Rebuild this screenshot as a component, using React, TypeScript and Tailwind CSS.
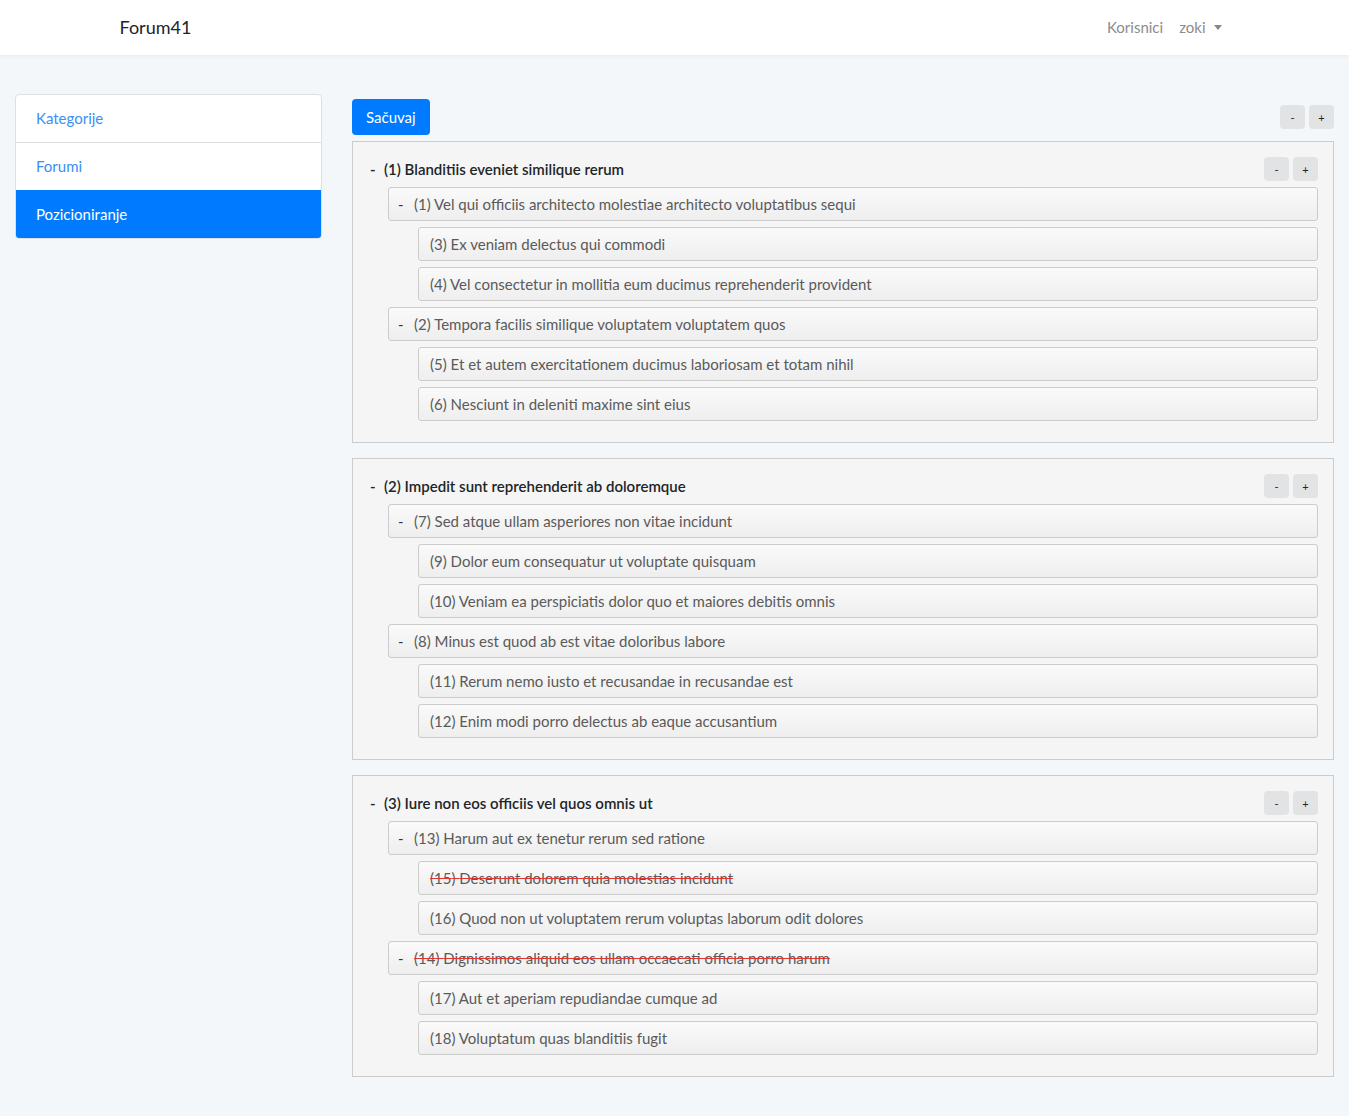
import React from 'react';

type Node = { id: number; title: string; struck?: boolean; children?: Node[] };

const tree: { id: number; title: string; children: Node[] }[] = [
  {
    id: 1, title: 'Blanditiis eveniet similique rerum', children: [
      { id: 1, title: 'Vel qui officiis architecto molestiae architecto voluptatibus sequi', children: [
        { id: 3, title: 'Ex veniam delectus qui commodi' },
        { id: 4, title: 'Vel consectetur in mollitia eum ducimus reprehenderit provident' },
      ] },
      { id: 2, title: 'Tempora facilis similique voluptatem voluptatem quos', children: [
        { id: 5, title: 'Et et autem exercitationem ducimus laboriosam et totam nihil' },
        { id: 6, title: 'Nesciunt in deleniti maxime sint eius' },
      ] },
    ],
  },
  {
    id: 2, title: 'Impedit sunt reprehenderit ab doloremque', children: [
      { id: 7, title: 'Sed atque ullam asperiores non vitae incidunt', children: [
        { id: 9, title: 'Dolor eum consequatur ut voluptate quisquam' },
        { id: 10, title: 'Veniam ea perspiciatis dolor quo et maiores debitis omnis' },
      ] },
      { id: 8, title: 'Minus est quod ab est vitae doloribus labore', children: [
        { id: 11, title: 'Rerum nemo iusto et recusandae in recusandae est' },
        { id: 12, title: 'Enim modi porro delectus ab eaque accusantium' },
      ] },
    ],
  },
  {
    id: 3, title: 'Iure non eos officiis vel quos omnis ut', children: [
      { id: 13, title: 'Harum aut ex tenetur rerum sed ratione', children: [
        { id: 15, title: 'Deserunt dolorem quia molestias incidunt', struck: true },
        { id: 16, title: 'Quod non ut voluptatem rerum voluptas laborum odit dolores' },
      ] },
      { id: 14, title: 'Dignissimos aliquid eos ullam occaecati officia porro harum', struck: true, children: [
        { id: 17, title: 'Aut et aperiam repudiandae cumque ad' },
        { id: 18, title: 'Voluptatum quas blanditiis fugit' },
      ] },
    ],
  },
];

const SmallBtn = ({ label }: { label: string }) => (
  <button className="w-[25px] h-[24px] rounded-[4px] bg-[#e2e3e5] text-[#212529] text-[11px] leading-none flex items-center justify-center">
    {label}
  </button>
);

const Item = ({ node, toggle }: { node: Node; toggle?: boolean }) => (
  <div className="h-[34px] flex items-center rounded-[3px] border border-[#ccc] bg-linear-to-b from-[#fafafa] to-[#eee] text-[#5a5a5a] text-[15px]">
    {toggle ? (
      <span className="pl-[9px] w-[25px] text-[#333]">-</span>
    ) : (
      <span className="w-[11px]" />
    )}
    <span className={node.struck ? 'line-through decoration-[#e3342f]' : ''}>
      ({node.id}) {node.title}
    </span>
  </div>
);

const App = () => {
  return (
    <div className="min-h-screen bg-[#f4f7fa] pb-[38px]" style={{ fontFamily: 'Lato, "Open Sans", sans-serif' }}>
      {/* Navbar */}
      <div className="bg-white h-[55px] shadow-[0_2px_4px_rgba(0,0,0,0.04)]">
        <div className="w-[1140px] mx-auto px-[15px] h-full flex items-center justify-between">
          <span className="text-[18px] text-[#212529]">Forum41</span>
          <div className="flex items-center text-[15px] text-[#8c8c8c] pr-[8px]">
            <span className="px-[8px]">Korisnici</span>
            <span className="pl-[8px] flex items-center">
              zoki
              <span className="ml-[8px] w-0 h-0 border-l-[4px] border-r-[4px] border-t-[5px] border-l-transparent border-r-transparent border-t-[#888]" />
            </span>
          </div>
        </div>
      </div>

      <div className="flex pt-[39px]">
        {/* Sidebar */}
        <div className="w-[337px] px-[15px] shrink-0">
          <div className="rounded-[4px] border border-[#dfdfdf] overflow-hidden bg-white text-[15px]">
            <div className="h-[48px] flex items-center px-[20px] text-[#3a8ff5] border-b border-[#dfdfdf]">Kategorije</div>
            <div className="h-[47px] flex items-center px-[20px] text-[#3a8ff5]">Forumi</div>
            <div className="h-[48px] flex items-center px-[20px] bg-[#007bff] text-white">Pozicioniranje</div>
          </div>
        </div>

        {/* Main */}
        <div className="flex-1 px-[15px]">
          <div className="flex items-start justify-between mt-[5px] mb-[6px]">
            <button className="h-[36px] px-[14px] rounded-[4px] bg-[#007bff] text-white text-[15px]">Sačuvaj</button>
            <div className="flex gap-[4px] mt-[6px]">
              <SmallBtn label="-" />
              <SmallBtn label="+" />
            </div>
          </div>

          <div className="flex flex-col gap-[15px]">
            {tree.map(cat => (
              <div key={cat.id} className="border border-[#ccc] bg-[#f5f5f5] pt-[15px] pb-[21px] px-[15px]">
                <div className="flex items-center justify-between h-[24px] mb-[6px]">
                  <div className="flex items-center text-[15px] font-semibold text-[#212529]">
                    <span className="w-[16px] pl-[2px]">-</span>
                    ({cat.id}) {cat.title}
                  </div>
                  <div className="flex gap-[4px]">
                    <SmallBtn label="-" />
                    <SmallBtn label="+" />
                  </div>
                </div>
                <div className="flex flex-col gap-[6px] pl-[20px]">
                  {cat.children.map(sub => (
                    <React.Fragment key={sub.id}>
                      <Item node={sub} toggle />
                      <div className="flex flex-col gap-[6px] pl-[30px]">
                        {sub.children?.map(leaf => (
                          <Item key={leaf.id} node={leaf} />
                        ))}
                      </div>
                    </React.Fragment>
                  ))}
                </div>
              </div>
            ))}
          </div>
        </div>
      </div>
    </div>
  );
};

export default App;
